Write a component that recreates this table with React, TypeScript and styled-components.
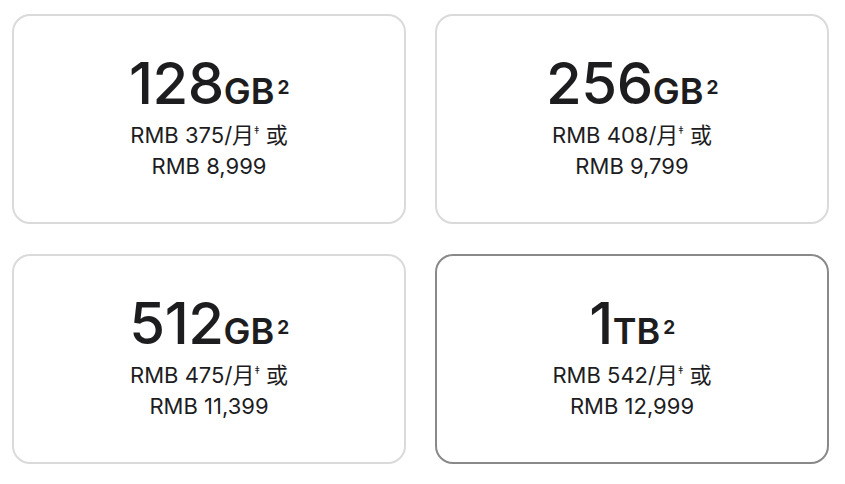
import React from "react";
import styled, { createGlobalStyle } from "styled-components";

interface Option {
  id: string;
  size: string;
  unit: string;
  monthly: string;
  full: string;
  active?: boolean;
}

const options: Option[] = [
  { id: "128", size: "128", unit: "GB", monthly: "375", full: "8,999" },
  { id: "256", size: "256", unit: "GB", monthly: "408", full: "9,799" },
  { id: "512", size: "512", unit: "GB", monthly: "475", full: "11,399" },
  { id: "1tb", size: "1", unit: "TB", monthly: "542", full: "12,999", active: true },
];

const App: React.FC = () => {
  return (
    <>
      <GlobalStyle />
      <Grid>
        {options.map((opt) => (
          <Card key={opt.id} $active={opt.active}>
            <Capacity>
              {opt.size}
              <Unit>{opt.unit}</Unit>
              <Note>2</Note>
            </Capacity>
            <Price>
              RMB {opt.monthly}/月<Dagger>‡</Dagger> 或
              <br />
              RMB {opt.full}
            </Price>
          </Card>
        ))}
      </Grid>
    </>
  );
};
export default App;

const GlobalStyle = createGlobalStyle`
  body {
    margin: 0;
    background: #fff;
    font-family: Inter, "Noto Sans CJK SC", sans-serif;
    color: #1d1d1f;
  }
`;

const Grid = styled.main`
  display: grid;
  grid-template-columns: repeat(2, 394px);
  grid-auto-rows: 210px;
  column-gap: 29px;
  row-gap: 30px;
  padding: 14px 0 0 12px;
`;

const Card = styled.div<{ $active?: boolean }>`
  display: flex;
  flex-direction: column;
  align-items: center;
  justify-content: center;
  border: 2px solid ${(p) => (p.$active ? "#898989" : "#dadada")};
  border-radius: 18px;
  box-sizing: border-box;
  padding-bottom: 2px;
`;

const Capacity = styled.div`
  display: flex;
  align-items: baseline;
  font-size: 58px;
  font-weight: 500;
  line-height: 58px;
  letter-spacing: -0.5px;
`;

const Unit = styled.span`
  font-size: 36px;
  font-weight: 600;
  letter-spacing: 0;
`;

const Note = styled.span`
  align-self: flex-start;
  margin: 24px 0 0 3px;
  font-size: 19px;
  font-weight: 700;
  line-height: 19px;
`;

const Price = styled.p`
  margin: 0;
  font-size: 22px;
  line-height: 31px;
  text-align: center;
`;

const Dagger = styled.sup`
  font-size: 11px;
  vertical-align: 9px;
  line-height: 0;
`;
